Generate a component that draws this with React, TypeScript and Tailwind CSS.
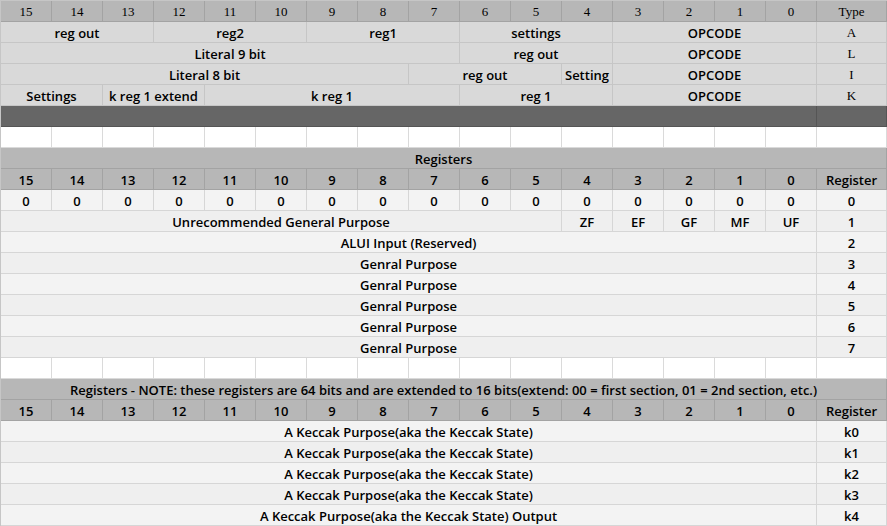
import React from 'react';

type Cell = { text?: string; span?: number; serif?: boolean };
type Row = { kind: 'head' | 'top' | 'dark' | 'blank' | 'light' | 'lighter'; cells: Cell[] };

// literal class names so tailwind picks them up
const SPAN: Record<number, string> = {
  1: 'col-span-1',
  2: 'col-span-2',
  3: 'col-span-3',
  4: 'col-span-4',
  5: 'col-span-5',
  8: 'col-span-8',
  9: 'col-span-9',
  11: 'col-span-11',
  16: 'col-span-16',
  17: 'col-span-17',
};

const ROW_STYLE: Record<Row['kind'], string> = {
  head: 'bg-[#b7b7b7] border-[#a3a3a3]',
  top: 'bg-[#d9d9d9] border-[#c6c6c6]',
  dark: 'bg-[#666666] border-[#555555]',
  blank: 'bg-white border-[#dadada]',
  light: 'bg-[#efefef] border-[#d6d6d6]',
  lighter: 'bg-[#f3f3f3] border-[#d6d6d6]',
};

const bits = Array.from({ length: 16 }, (_, i) => String(15 - i));

const bitHeader = (last: string, serif = false): Cell[] => [
  ...bits.map((b) => ({ text: b, serif })),
  { text: last, serif },
];

const blankRow: Cell[] = Array.from({ length: 17 }, () => ({}));

const wide = (text: string, reg: string): Cell[] => [{ text, span: 16 }, { text: reg }];

const rows: Row[] = [
  { kind: 'head', cells: bitHeader('Type', true) },
  {
    kind: 'top',
    cells: [
      { text: 'reg out', span: 3 },
      { text: 'reg2', span: 3 },
      { text: 'reg1', span: 3 },
      { text: 'settings', span: 3 },
      { text: 'OPCODE', span: 4 },
      { text: 'A', serif: true },
    ],
  },
  {
    kind: 'top',
    cells: [
      { text: 'Literal 9 bit', span: 9 },
      { text: 'reg out', span: 3 },
      { text: 'OPCODE', span: 4 },
      { text: 'L', serif: true },
    ],
  },
  {
    kind: 'top',
    cells: [
      { text: 'Literal 8 bit', span: 8 },
      { text: 'reg out', span: 3 },
      { text: 'Setting', span: 1 },
      { text: 'OPCODE', span: 4 },
      { text: 'I', serif: true },
    ],
  },
  {
    kind: 'top',
    cells: [
      { text: 'Settings', span: 2 },
      { text: 'k reg 1 extend', span: 2 },
      { text: 'k reg 1', span: 5 },
      { text: 'reg 1', span: 3 },
      { text: 'OPCODE', span: 4 },
      { text: 'K', serif: true },
    ],
  },
  { kind: 'dark', cells: [{ span: 16 }, {}] },
  { kind: 'blank', cells: blankRow },
  { kind: 'head', cells: [{ text: 'Registers', span: 17 }] },
  { kind: 'head', cells: bitHeader('Register') },
  { kind: 'lighter', cells: [...bits.map(() => ({ text: '0' })), { text: '0' }] },
  {
    kind: 'light',
    cells: [
      { text: 'Unrecommended General Purpose', span: 11 },
      { text: 'ZF' },
      { text: 'EF' },
      { text: 'GF' },
      { text: 'MF' },
      { text: 'UF' },
      { text: '1' },
    ],
  },
  { kind: 'lighter', cells: wide('ALUI Input (Reserved)', '2') },
  { kind: 'light', cells: wide('Genral Purpose', '3') },
  { kind: 'lighter', cells: wide('Genral Purpose', '4') },
  { kind: 'light', cells: wide('Genral Purpose', '5') },
  { kind: 'lighter', cells: wide('Genral Purpose', '6') },
  { kind: 'light', cells: wide('Genral Purpose', '7') },
  { kind: 'blank', cells: blankRow },
  {
    kind: 'head',
    cells: [
      {
        text: 'Registers - NOTE: these registers are 64 bits and are extended to 16 bits(extend: 00 = first section, 01 = 2nd section, etc.)',
        span: 17,
      },
    ],
  },
  { kind: 'head', cells: bitHeader('Register') },
  { kind: 'lighter', cells: wide('A Keccak Purpose(aka the Keccak State)', 'k0') },
  { kind: 'light', cells: wide('A Keccak Purpose(aka the Keccak State)', 'k1') },
  { kind: 'lighter', cells: wide('A Keccak Purpose(aka the Keccak State)', 'k2') },
  { kind: 'light', cells: wide('A Keccak Purpose(aka the Keccak State)', 'k3') },
  { kind: 'lighter', cells: wide('A Keccak Purpose(aka the Keccak State) Output', 'k4') },
];

export default function App() {
  return (
    <main className="w-[887px] h-[526px] overflow-hidden bg-white">
      <div className="grid grid-cols-[repeat(16,51px)_70px] border-l border-t border-[#c6c6c6] w-[887px]">
        {rows.map((row, r) =>
          row.cells.map((cell, c) => (
            <div
              key={`${r}-${c}`}
              className={`${SPAN[cell.span ?? 1]} ${ROW_STYLE[row.kind]} h-[21px] border-r border-b flex items-center justify-center whitespace-nowrap overflow-visible text-black ${
                cell.serif
                  ? "font-['Liberation_Serif',serif] text-[13px] text-[#222] pt-[2px]"
                  : "font-['Open_Sans',sans-serif] text-[13px] font-semibold pt-[4px]"
              }`}
            >
              {cell.text}
            </div>
          ))
        )}
      </div>
    </main>
  );
}
